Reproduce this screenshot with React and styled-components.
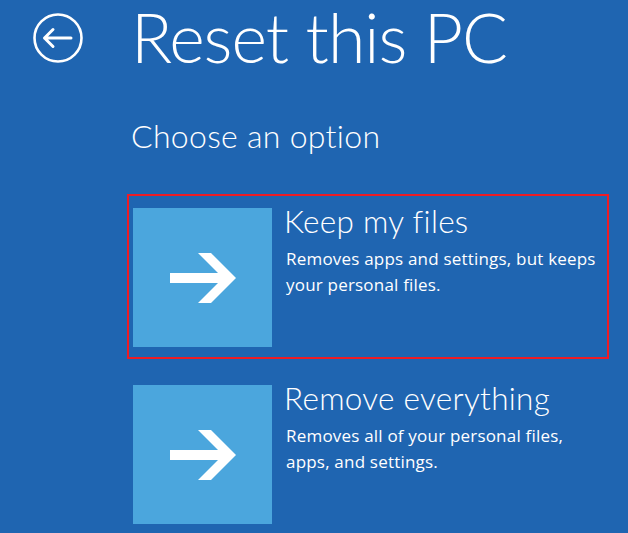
import styled, { createGlobalStyle } from "styled-components";

const GlobalStyle = createGlobalStyle`
  html, body {
    margin: 0;
    padding: 0;
    background-color: #1f65b1;
    overflow: hidden;
  }
  body {
    font-family: "Open Sans", "Noto Sans", "Liberation Sans", sans-serif;
    color: #ffffff;
  }
`;

const StyledPage = styled.div`
  width: 628px;
  height: 533px;
  background-color: #1f65b1;
`;

const StyledHeader = styled.header`
  display: flex;
  align-items: flex-start;
  padding: 3px 0 0 33px;
`;

const StyledBackButton = styled.button`
  width: 50px;
  height: 50px;
  padding: 0;
  margin: 10px 48px 0 0;
  border: none;
  background-color: transparent;
  color: white;
  display: flex;
`;

const StyledTitle = styled.h1`
  margin: 0;
  font-family: Lato, "Open Sans", sans-serif;
  font-size: 68px;
  font-weight: 300;
  line-height: 68px;
  letter-spacing: -1px;
`;

const StyledContent = styled.main`
  padding-left: 127px;
`;

const StyledSubtitle = styled.h2`
  margin: 45px 0 38px 4px;
  font-family: Lato, "Open Sans", sans-serif;
  font-size: 32px;
  font-weight: 300;
  line-height: 40px;
  letter-spacing: 0.3px;
`;

const StyledOptionList = styled.div`
  display: flex;
  flex-direction: column;
  gap: 12px;
`;

const StyledOption = styled.button`
  display: flex;
  gap: 12px;
  width: 482px;
  box-sizing: border-box;
  padding: 12px 4px 10px 4px;
  border: 2px solid ${(props) => (props.$selected ? "#ee1c25" : "transparent")};
  background-color: transparent;
  color: white;
  font-family: inherit;
  text-align: left;
  cursor: pointer;
`;

const StyledTile = styled.div`
  flex: 0 0 139px;
  width: 139px;
  height: 139px;
  background-color: #4ba6dd;
  display: flex;
  align-items: center;
  justify-content: center;
`;

const StyledOptionText = styled.div`
  display: flex;
  flex-direction: column;
  width: 316px;
`;

const StyledOptionTitle = styled.span`
  font-family: Lato, "Open Sans", sans-serif;
  font-size: 31.5px;
  font-weight: 300;
  line-height: 36px;
  margin-top: -5px;
  letter-spacing: 0.3px;
`;

const StyledOptionDescription = styled.span`
  font-size: 17px;
  line-height: 26px;
  letter-spacing: 0.2px;
  margin-top: 7px;
  padding-left: 2px;
`;

function BackIcon() {
  return (
    <svg width="50" height="50" viewBox="0 0 50 50" fill="none">
      <circle cx="25" cy="25" r="23.5" stroke="white" strokeWidth="2.6" />
      <path
        d="M11.5 25 H38 M20 16.5 L11.5 25 L20 33.5"
        stroke="white"
        strokeWidth="3"
        strokeLinecap="round"
        strokeLinejoin="round"
      />
    </svg>
  );
}

function ArrowIcon() {
  return (
    <svg width="66" height="50" viewBox="0 0 66 50" fill="white">
      <rect x="0" y="20" width="56" height="10" />
      <polygon points="28,0 41,0 66,25 41,50 28,50 53,25" />
    </svg>
  );
}

const options = [
  {
    id: "keep",
    title: "Keep my files",
    description: "Removes apps and settings, but keeps your personal files.",
    selected: true,
  },
  {
    id: "remove",
    title: "Remove everything",
    description: "Removes all of your personal files, apps, and settings.",
    selected: false,
  },
];

export default function App() {
  return (
    <>
      <GlobalStyle />
      <StyledPage>
        <StyledHeader>
          <StyledBackButton aria-label="Back">
            <BackIcon />
          </StyledBackButton>
          <StyledTitle>Reset this PC</StyledTitle>
        </StyledHeader>
        <StyledContent>
          <StyledSubtitle>Choose an option</StyledSubtitle>
          <StyledOptionList>
            {options.map((option) => (
              <StyledOption key={option.id} $selected={option.selected}>
                <StyledTile>
                  <ArrowIcon />
                </StyledTile>
                <StyledOptionText>
                  <StyledOptionTitle>{option.title}</StyledOptionTitle>
                  <StyledOptionDescription>
                    {option.description}
                  </StyledOptionDescription>
                </StyledOptionText>
              </StyledOption>
            ))}
          </StyledOptionList>
        </StyledContent>
      </StyledPage>
    </>
  );
}
